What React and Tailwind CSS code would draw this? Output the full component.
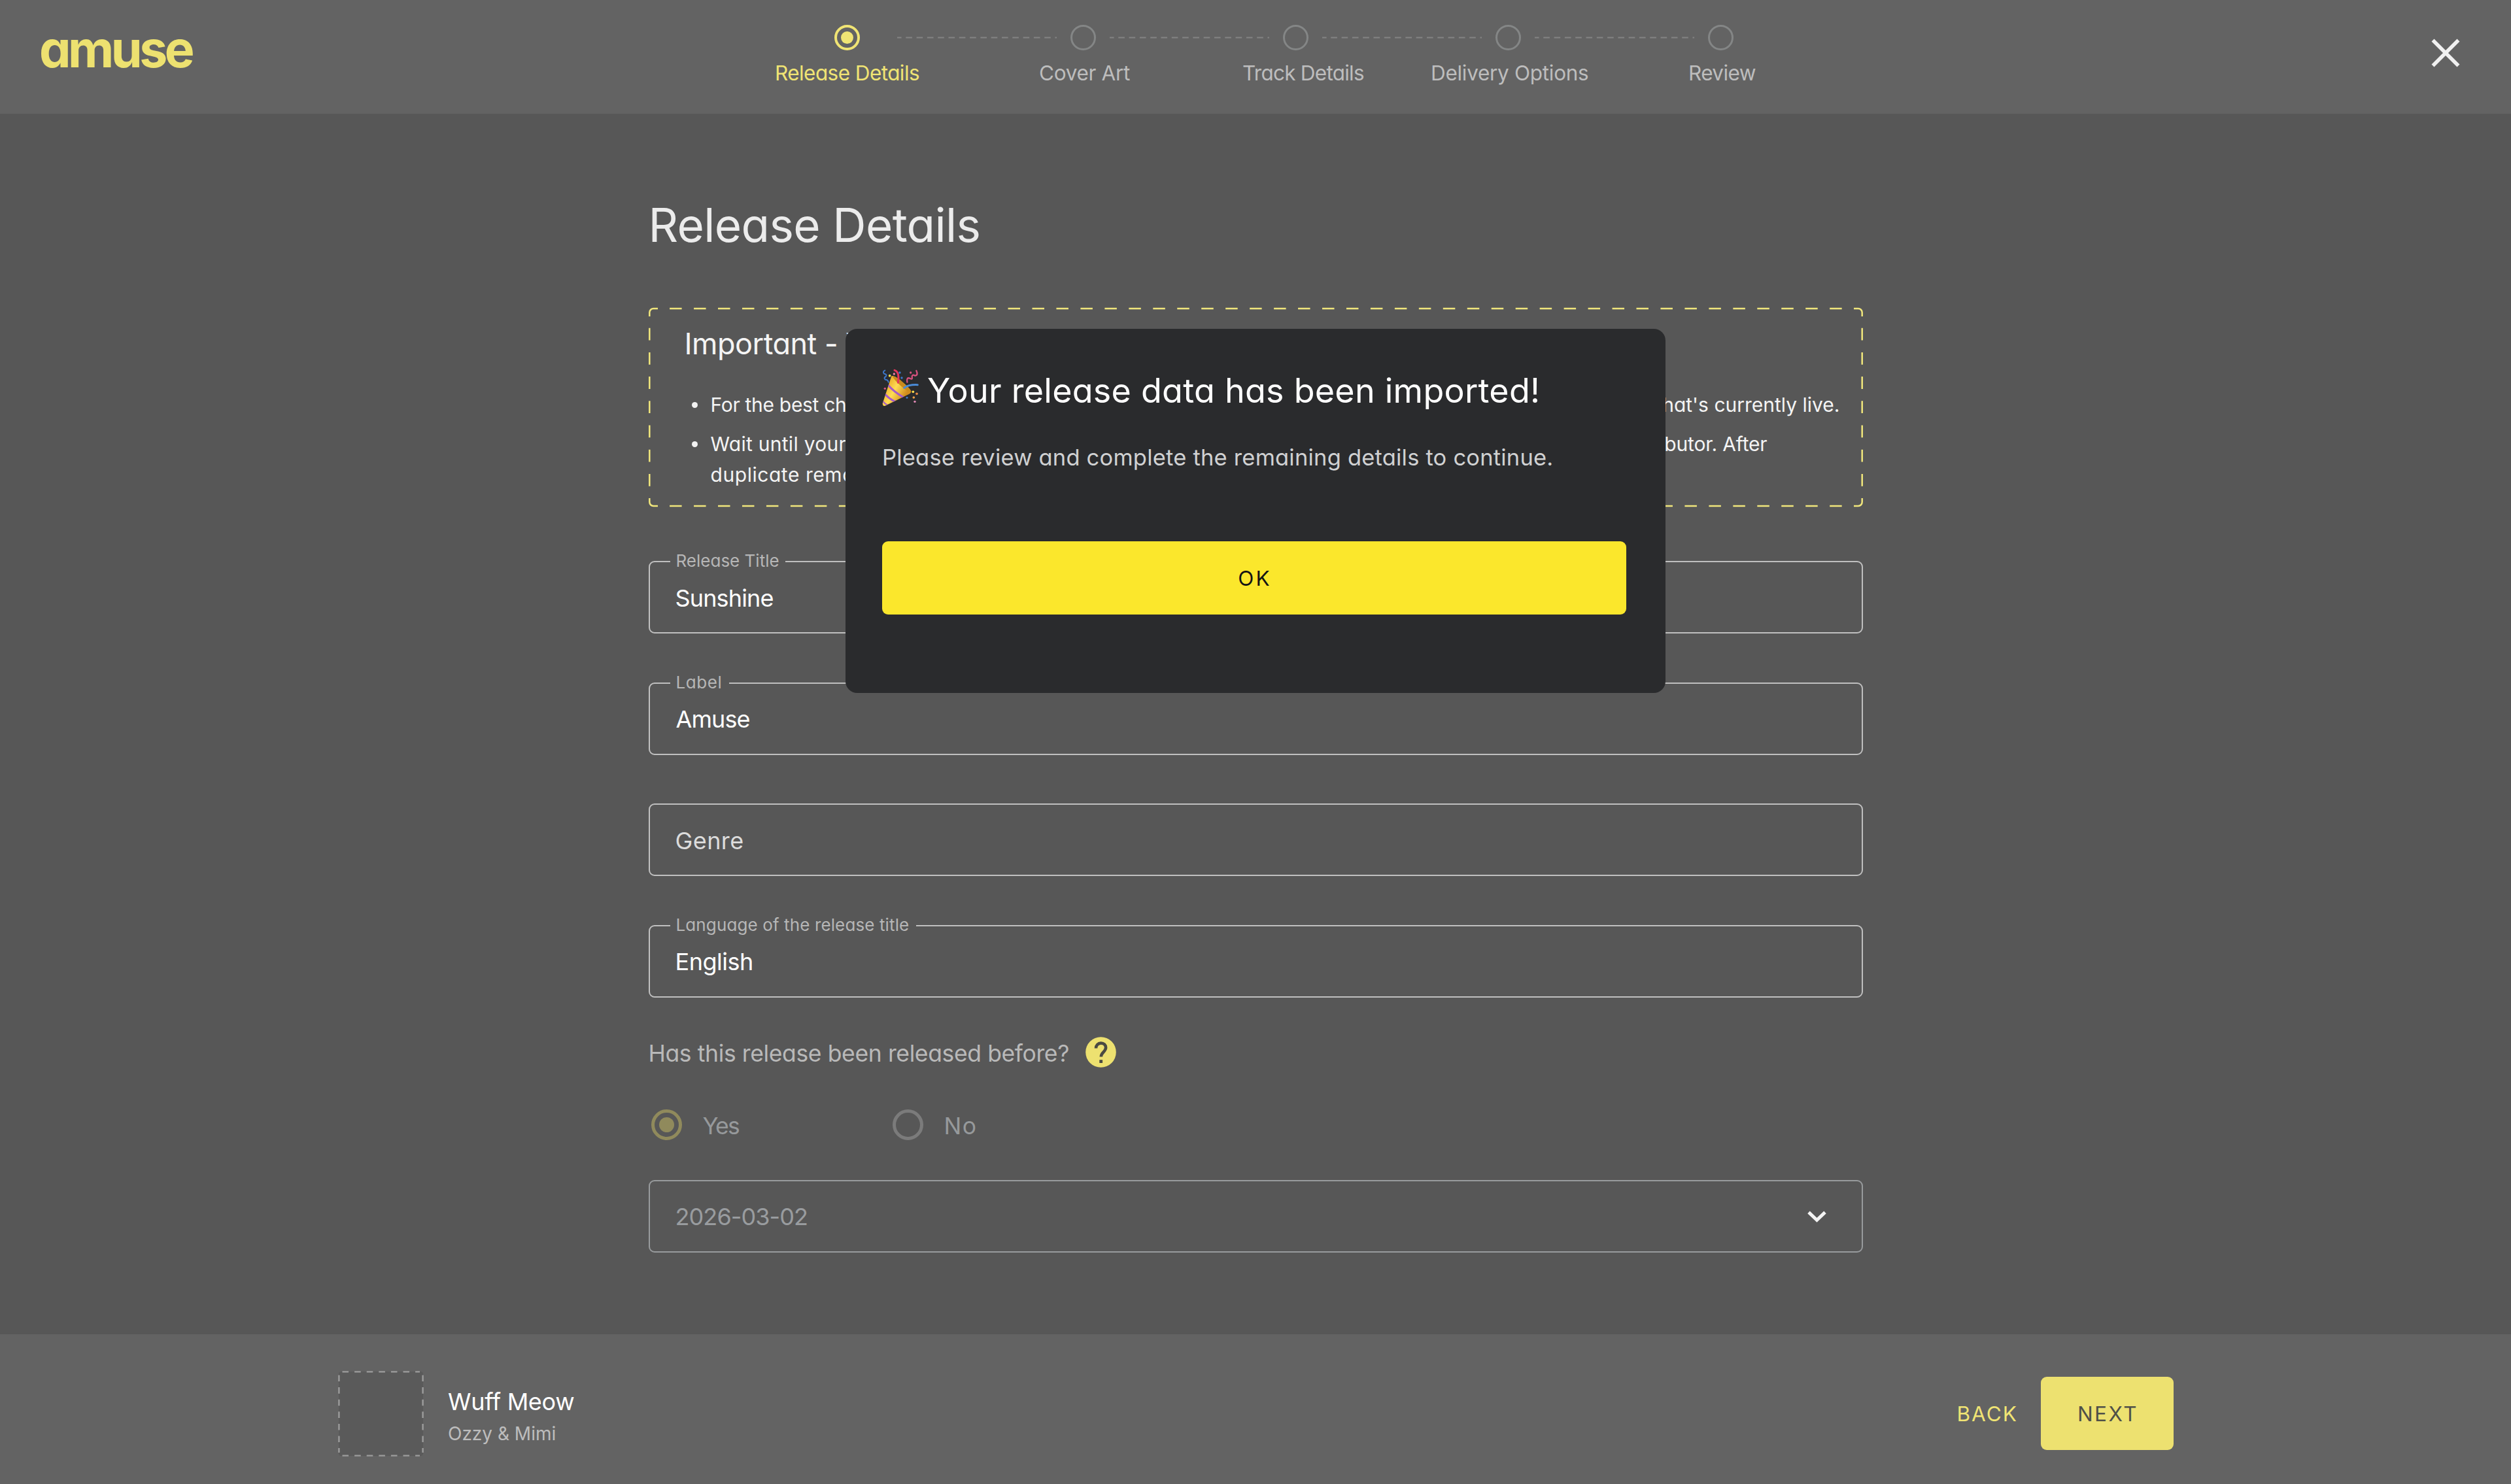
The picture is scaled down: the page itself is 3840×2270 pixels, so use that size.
import React from "react";

const STEP_LABELS = [
  { name: "Release Details", cls: "text-[#f0e474] tracking-[-0.57px]" },
  { name: "Cover Art", cls: "text-[#bdbdbd] tracking-[-0.32px]" },
  { name: "Track Details", cls: "text-[#bdbdbd] tracking-[-0.75px]" },
  { name: "Delivery Options", cls: "text-[#bdbdbd] tracking-[-0.3px]" },
  { name: "Review", cls: "text-[#bdbdbd] tracking-[-0.6px]" },
];

function Connector() {
  return (
    <svg className="mx-[21px] h-[3px] w-[244px] shrink-0" viewBox="0 0 244 3">
      <path d="M-3 1.5H244" stroke="#848484" strokeWidth="2.2" strokeDasharray="9.6 6.7" />
    </svg>
  );
}

function StepDot({ active }) {
  return active ? (
    <span className="mr-9 flex size-[39px] shrink-0 items-center justify-center rounded-full border-4 border-[#f0e474]">
      <span className="size-[19px] rounded-full bg-[#f0e474]" />
    </span>
  ) : (
    <span className="size-[39px] shrink-0 rounded-full border-3 border-[#848686]" />
  );
}

function Header() {
  return (
    <header className="flex h-[174px] items-start bg-[#636363]">
      <div className="w-[1185px] shrink-0 pt-[37px] pl-[60px] text-[77px] leading-[76px] font-bold tracking-[-4.5px] text-[#ede170]">
        amuse
      </div>
      <nav className="flex grow flex-col pt-[38px]">
        <div className="flex items-center pl-[91px]">
          <StepDot active />
          <Connector />
          <StepDot />
          <Connector />
          <StepDot />
          <Connector />
          <StepDot />
          <Connector />
          <StepDot />
        </div>
        <div className="mt-[15px] grid grid-cols-[404px_311px_288px_394px_200px] text-[31.5px] leading-[40px] whitespace-nowrap">
          {STEP_LABELS.map((s) => (
            <span key={s.name} className={s.cls}>
              {s.name}
            </span>
          ))}
        </div>
      </nav>
      <svg className="mt-[59px] mr-[78px] size-[44px]" viewBox="0 0 44 44" aria-label="Close">
        <path d="M2.5 2.5l39 39M41.5 2.5l-39 39" stroke="#f0f0f0" strokeWidth="5.6" />
      </svg>
    </header>
  );
}

function DashedFrame() {
  return (
    <svg
      className="absolute inset-0 h-[306px] w-[1857px]"
      viewBox="0 0 1857 306"
      fill="none"
      stroke="#f0e67c"
      strokeWidth="2.5"
    >
      <path d="M1.3 14V8a6 6 0 0 1 6-6H14M1843 2h6.7a6 6 0 0 1 6 6v6M1855.7 292v6a6 6 0 0 1-6 6H1843M14 304H7.3a6 6 0 0 1-6-6v-6" />
      <path d="M32.1 2H1825M32.1 304H1825" strokeDasharray="18.5 18.46" />
      <path d="M1.3 31.7V274M1855.7 31.7V274" strokeDasharray="18.8 18.4" />
    </svg>
  );
}

function Bullet() {
  return <span className="mr-5 size-[9px] shrink-0 rounded-full bg-[#f2f2f2]" />;
}

function Notice() {
  return (
    <section className="relative mt-[81px] h-[306px] text-[#f4f4f4]">
      <DashedFrame />
      <h2 className="pt-[31px] pl-[55px] text-[45px] leading-[50px] tracking-[-0.5px]">Important - Y</h2>
      <div className="mt-[48px] flex h-10 items-center pl-[66px] text-[30px] whitespace-nowrap">
        <Bullet />
        <span className="tracking-[-0.3px]">For the best ch</span>
        <span className="mr-[35px] ml-auto">that&apos;s currently live.</span>
      </div>
      <div className="mt-5 flex h-10 items-center pl-[66px] text-[30px] whitespace-nowrap">
        <Bullet />
        <span className="tracking-[0.27px]">Wait until your</span>
        <span className="mr-[146px] ml-auto tracking-[-0.17px]">distributor. After</span>
      </div>
      <div className="mt-[7px] flex h-10 items-center pl-[95px] text-[30px] tracking-[0.55px]">
        duplicate remo
      </div>
    </section>
  );
}

function Field({ label, labelClass, value, valueClass, children, boxClass = "border-[#c0c0c0]" }) {
  return (
    <div className={`relative flex h-[111px] shrink-0 items-center rounded-[9px] border-2 pl-[39px] ${boxClass}`}>
      {label && (
        <span
          className={`absolute top-[-18px] left-[31px] bg-[#575757] pl-[9px] text-[26px] leading-[32px] whitespace-nowrap text-[#b6b6b6] ${labelClass}`}
        >
          {label}
        </span>
      )}
      <span className={`pt-0.5 text-[36px] leading-[44px] ${valueClass}`}>{value}</span>
      {children}
    </div>
  );
}

function Form() {
  return (
    <main className="flex h-[1867px] w-[1857px] flex-col self-center pt-[125px]">
      <h1 className="text-[71px] leading-[90px] tracking-[-0.64px] text-[#ececec]">Release Details</h1>
      <Notice />
      <div className="mt-[82px] flex flex-col gap-[74.67px]">
        <Field
          label="Release Title"
          labelClass="w-[176px]"
          value="Sunshine"
          valueClass="text-white tracking-[-0.85px]"
        />
        <Field
          label="Label"
          labelClass="w-[90px] tracking-[0.6px]"
          value="Amuse"
          valueClass="pl-px text-white tracking-[-0.92px]"
        />
        <Field value="Genre" valueClass="text-[#dcdcdc] tracking-[0.4px]" />
        <Field
          label="Language of the release title"
          labelClass="w-[376px] tracking-[0.12px]"
          value="English"
          valueClass="text-white tracking-[-0.5px]"
        />
      </div>
      <div className="mt-[60px] flex h-12 items-center">
        <span className="pt-[3px] text-[35.5px] tracking-[-0.38px] whitespace-nowrap text-[#b9b9b9]">
          Has this release been released before?
        </span>
        <svg className="ml-[25px] size-[47px]" viewBox="0 0 47 47" aria-label="Help">
          <circle cx="23.5" cy="23.5" r="23.3" fill="#ede170" />
          <path
            d="M16 17.6c0-4.8 3.3-8 7.6-8 4.4 0 7.5 2.8 7.5 7 0 6.2-7.3 6.8-7.3 14"
            fill="none"
            stroke="#4a4a42"
            strokeWidth="4.6"
          />
          <rect x="21.3" y="35.2" width="4.8" height="4.8" fill="#4a4a42" />
        </svg>
      </div>
      <div className="mt-[63px] flex h-12 items-center text-[35.5px] text-[#96999b]">
        <span className="ml-1 flex size-[47px] items-center justify-center rounded-full border-5 border-[#908a5c]">
          <span className="size-[23px] rounded-full bg-[#908a5c]" />
        </span>
        <span className="ml-[32px] w-[290px] pt-1 tracking-[-1.8px]">Yes</span>
        <span className="size-[47px] rounded-full border-5 border-[#7b7b7b]" />
        <span className="ml-[32px] pt-1 tracking-[1.5px]">No</span>
      </div>
      <div className="mt-[60px] flex flex-col">
        <Field
          value="2026-03-02"
          valueClass="text-[#999c9f] tracking-[-0.91px]"
          boxClass="border-[#989b9d]"
        >
          <svg className="mt-px mr-[54px] ml-auto h-[18px] w-[29px]" viewBox="0 0 29 18">
            <path d="M2 2.4L14.5 14.4 27 2.4" fill="none" stroke="#f4f4f4" strokeWidth="5" />
          </svg>
        </Field>
      </div>
    </main>
  );
}

function Footer() {
  return (
    <footer className="flex h-[229px] items-start bg-[#636363] pt-[56px] pr-[516px] pl-[517px]">
      <svg className="size-[131px]" viewBox="0 0 131 131" fill="none" stroke="#9c9c9c" strokeWidth="2.4">
        <rect x="1" y="1" width="129" height="129" rx="4" fill="#5a5a5a" stroke="none" />
        <path d="M6.5 1.4H125M6.5 129.6H125" strokeDasharray="9.6 9" />
        <path d="M1.4 6.5V125M129.6 6.5V125" strokeDasharray="9.6 9" />
      </svg>
      <div className="ml-[37px] pt-[25px]">
        <div className="text-[36px] leading-[44px] tracking-[-0.3px] text-white">Wuff Meow</div>
        <div className="mt-[9px] text-[28px] leading-[36px] text-[#bdbdbd]">Ozzy &amp; Mimi</div>
      </div>
      <span className="mt-[46px] mr-[35px] ml-auto text-[31.5px] leading-[40px] tracking-[2.04px] text-[#f0e474]">
        BACK
      </span>
      <span className="mt-[9px] flex h-[112px] w-[203px] items-center justify-center rounded-[9px] bg-[#ede170] pt-px pl-[2px] text-[31.5px] tracking-[2.5px] text-[#505048]">
        NEXT
      </span>
    </footer>
  );
}

function PartyPopper() {
  return (
    <svg className="-mt-3 -ml-[3px] size-[60px] shrink-0" viewBox="0 0 180 180" aria-label="Party popper">
      <defs>
        <linearGradient id="cone" x1="20" y1="90" x2="110" y2="140" gradientUnits="userSpaceOnUse">
          <stop offset="0" stopColor="#e9ab26" />
          <stop offset="0.45" stopColor="#ffdc55" />
          <stop offset="1" stopColor="#d08b1c" />
        </linearGradient>
        <clipPath id="coneClip">
          <path d="M52 40Q62 34 90 58Q132 90 142 108Q143 118 130 124L26 175Q12 182 11 166Z" />
        </clipPath>
      </defs>
      <path d="M52 40Q62 34 90 58Q132 90 142 108Q143 118 130 124L26 175Q12 182 11 166Z" fill="url(#cone)" />
      <g clipPath="url(#coneClip)" fill="none" stroke="#a55bc8" strokeWidth="9">
        <path d="M34 78Q62 112 108 138" />
        <path d="M20 120Q38 142 70 158" />
        <path d="M10 150Q18 166 36 174" strokeWidth="6" />
      </g>
      <path d="M56 40Q80 44 108 72Q140 100 140 112Q122 110 94 84Q62 56 56 40Z" fill="#c98a1c" />
      <g fill="none" strokeLinecap="round">
        <path d="M22 14Q10 20 18 29Q34 32 26 42Q14 48 24 56Q36 56 38 68" stroke="#3d78cc" strokeWidth="6" />
        <path d="M66 13Q90 20 82 70" stroke="#e4365c" strokeWidth="9" />
        <path d="M166 15Q176 36 160 38Q146 30 146 44Q150 58 136 50Q120 44 124 68" stroke="#d9527f" strokeWidth="7" />
        <path d="M110 94Q132 78 172 80" stroke="#4a8bd6" strokeWidth="9" />
      </g>
      <circle cx="44" cy="38" r="5.5" fill="#ffe04d" />
      <circle cx="64" cy="30" r="5" fill="#f07fa6" />
      <circle cx="90" cy="24" r="5" fill="#3d78cc" />
      <circle cx="99" cy="48" r="5" fill="#3d78cc" />
      <circle cx="140" cy="24" r="5" fill="#d9527f" />
      <circle cx="22" cy="97" r="5" fill="#d9527f" />
      <circle cx="151" cy="112" r="5.5" fill="#ffe04d" />
      <circle cx="168" cy="121" r="5.5" fill="#e88a45" />
      <circle cx="154" cy="138" r="5.5" fill="#f0a04a" />
      <circle cx="123" cy="139" r="4.5" fill="#3d78cc" />
      <circle cx="159" cy="157" r="5" fill="#e58bb8" />
    </svg>
  );
}

function ImportedDialog() {
  return (
    <div className="absolute top-[503px] left-[1293px] flex h-[557px] w-[1254px] flex-col rounded-[18px] bg-[#2a2b2d] px-[56px]">
      <div className="mt-[60px] flex h-[70px] items-center whitespace-nowrap">
        <PartyPopper />
        <span className="ml-3 text-[52px] tracking-[0.26px] text-white">Your release data has been imported!</span>
      </div>
      <p className="mt-[45px] text-[34.5px] leading-[44px] tracking-[0.2px] whitespace-nowrap text-[#d0d1d2]">
        Please review and complete the remaining details to continue.
      </p>
      <button className="mt-[106px] flex h-[112px] w-[1138px] items-center justify-center rounded-[9px] bg-[#fbe72c] pt-0.5 pl-0.5 text-[31.5px] tracking-[3px] text-[#141414]">
        OK
      </button>
    </div>
  );
}

export default function App() {
  return (
    <div className="relative flex h-[2270px] w-[3840px] flex-col overflow-hidden bg-[#575757] font-['Inter',sans-serif] [font-feature-settings:'cv11']">
      <Header />
      <Form />
      <Footer />
      <ImportedDialog />
    </div>
  );
}
